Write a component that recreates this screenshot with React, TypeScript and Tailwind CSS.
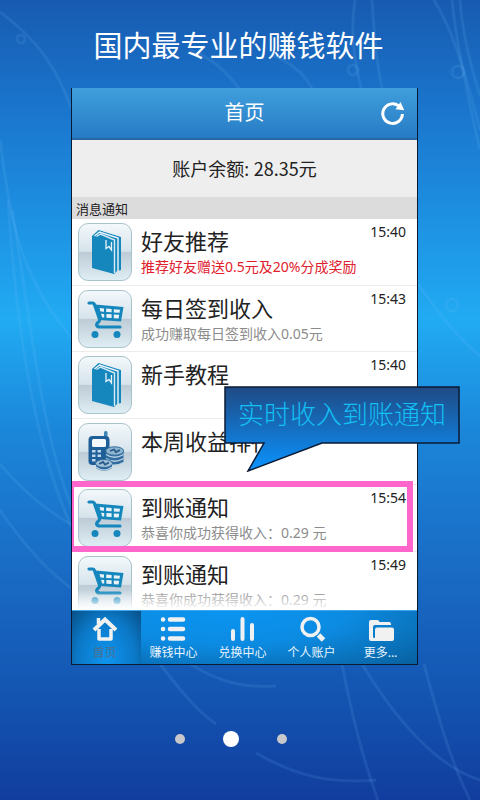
import React from "react";

function Backdrop() {
  return (
    <svg
      className="absolute inset-0 -z-10 h-full w-full"
      viewBox="0 0 480 800"
      preserveAspectRatio="none"
      fill="none"
      aria-hidden="true"
    >
      <g stroke="#7cc4ff" strokeOpacity="0.12" strokeWidth="3">
        <path d="M0 12C38 40 58 70 71 108" />
        <path d="M0 140C8 200 14 240 34 280S60 320 76 345" />
        <path d="M8 200C16 320 32 440 72 528" />
        <path d="M12 210C28 300 40 430 72 508" />
        <path d="M0 464C24 492 48 512 74 526" />
        <path d="M0 510C24 545 48 572 74 590" />
        <path d="M190 50C214 58 230 76 240 90" />
        <path d="M270 55C292 62 304 74 312 88" />
        <path d="M355 0C350 30 354 60 361 88" />
        <path d="M372 0C374 34 376 60 382 88" />
        <path d="M434 0C452 30 462 60 480 130" />
        <path d="M452 0C456 40 466 90 480 150" />
        <path d="M460 0C462 30 472 70 480 96" />
        <path d="M418 284C436 310 460 340 480 356" />
        <path d="M160 664C180 690 196 710 216 724" />
        <path d="M190 664C222 684 248 688 276 686" />
        <path d="M256 753C296 776 330 784 376 780" />
        <path d="M342 664C352 716 362 758 378 800" />
        <path d="M362 664C396 720 436 766 480 780" />
        <path d="M424 664C438 716 450 760 470 800" />
      </g>
      <g stroke="#7cc4ff" strokeOpacity="0.12" strokeWidth="3">
        <circle cx="21" cy="39" r="4" />
        <circle cx="353" cy="70" r="5" />
        <circle cx="458" cy="72" r="6" />
        <circle cx="452" cy="305" r="6" />
      </g>
    </svg>
  );
}

function RefreshIcon() {
  return (
    <svg className="h-6 w-6" viewBox="0 0 24 24" fill="none" aria-hidden="true">
      <path d="M21.400 13A9.800 9.800 0 1 1 17.500 4.800" stroke="#fff" strokeWidth="3" />
      <path d="M19.500 1L23.300 9.300L14.500 8.300Z" fill="#fff" />
    </svg>
  );
}

function BookIcon() {
  return (
    <svg className="h-full w-full" viewBox="1 1 52 56" aria-hidden="true">
      <path d="M14 13L20.500 7L43 14V47L39 48L36 51L14 45Z" fill="#1587bd" />
      <path d="M16.500 13L21.500 9L40 15V48" fill="none" stroke="#eef6fa" strokeWidth="1.400" />
      <path d="M18.500 13.500L22.500 11L36.500 17V50" fill="none" stroke="#d9ebf4" strokeWidth="1.400" />
      <path d="M28 17V25.500L31 23.500L33.500 27V19" fill="none" stroke="#e8f4fa" strokeWidth="1.300" />
    </svg>
  );
}

function CartIcon() {
  return (
    <svg className="h-full w-full" viewBox="1 1 52 56" aria-hidden="true">
      <path d="M17 14.500L45.500 17L43 31.500L22 30Z" fill="#1587bd" />
      <g fill="#e9f2f7">
        <path d="M21.500 18L26 18.400V21.800L22.500 21.500ZM28.200 18.600L33.600 19V22.300L28.200 22ZM35.800 19.200L42 19.700L41.500 22.800L35.800 22.500Z" />
        <path d="M23 23.700L26.200 23.900V27.600L24.200 27.500ZM28.400 24L33.600 24.300V28L28.400 27.700ZM35.800 24.500L41.200 24.800L40.600 28.500L35.800 28.200Z" />
      </g>
      <path
        d="M11 13H14.500Q16 13 16.600 15L21.500 29Q22 31 20 32.500Q17.500 35 19.500 36.500Q20.500 37 22.500 37H42"
        fill="none"
        stroke="#1587bd"
        strokeWidth="3.200"
        strokeLinecap="round"
        strokeLinejoin="round"
      />
      <circle cx="17" cy="44.500" r="3.500" fill="#1587bd" />
      <circle cx="39" cy="44.500" r="3.500" fill="#1587bd" />
    </svg>
  );
}

function PhoneCoinsIcon() {
  return (
    <svg className="h-full w-full" viewBox="1 1 52 56" aria-hidden="true">
      <rect x="26" y="8" width="3.500" height="11" rx="1.500" fill="#3c84b5" />
      <rect x="10.500" y="13" width="21" height="29" rx="4" fill="#1f5f98" />
      <rect x="14" y="16" width="14" height="8" rx="1.500" fill="#f2f8fb" />
      <g fill="#bcd8ea">
        <rect x="14" y="27" width="3.500" height="2.500" />
        <rect x="19.500" y="27" width="3.500" height="2.500" />
        <rect x="14" y="31.500" width="3.500" height="2.500" />
        <rect x="19.500" y="31.500" width="3.500" height="2.500" />
        <rect x="14" y="36" width="3.500" height="2.500" />
      </g>
      <path d="M28 28V39Q36 45 45.500 39V28Z" fill="#316e9f" />
      <g fill="none" stroke="#b9d3e4" strokeWidth="1.300">
        <path d="M28 31.500Q36.500 37 45.500 31.500M28 35.500Q36.500 41 45.500 35.500M28 39.500Q36.500 45 45.500 39.500" />
      </g>
      <ellipse cx="36.700" cy="28" rx="9" ry="4.200" fill="#8fb4ce" stroke="#316e9f" />
      <path d="M32 28L36 26.500L38 29L42 27" stroke="#24598a" strokeWidth="1.800" fill="none" />
      <path d="M18 41V45Q26 51 34 45V41Z" fill="#28629a" />
      <path d="M18 44Q26 50 34 44" fill="none" stroke="#b9d3e4" strokeWidth="1.300" />
      <ellipse cx="26" cy="40.500" rx="8.500" ry="4" fill="#a3c1d6" stroke="#316e9f" />
      <path d="M21 41L25 39L27 41.500L31 39.500" stroke="#24598a" strokeWidth="1.800" fill="none" />
    </svg>
  );
}

type Notice = {
  icon: () => React.ReactElement;
  title: string;
  detail?: string;
  time?: string;
  alert?: boolean;
  framed?: boolean;
};

const notices: Notice[] = [
  { icon: BookIcon, title: "好友推荐", detail: "推荐好友赠送0.5元及20%分成奖励", time: "15:40", alert: true },
  { icon: CartIcon, title: "每日签到收入", detail: "成功赚取每日签到收入0.05元", time: "15:43" },
  { icon: BookIcon, title: "新手教程", time: "15:40" },
  { icon: PhoneCoinsIcon, title: "本周收益排行" },
  { icon: CartIcon, title: "到账通知", detail: "恭喜你成功获得收入：0.29 元", time: "15:54", framed: true },
  { icon: CartIcon, title: "到账通知", detail: "恭喜你成功获得收入：0.29 元", time: "15:49" },
];

function NoticeRow({ notice }: { notice: Notice }) {
  const Icon = notice.icon;
  return (
    <li className="relative flex items-start border-b border-[#ececec] pr-[11px] pl-[6px]">
      <span className="mt-1 h-[58px] w-[54px] shrink-0 rounded-[10px] border border-[#a9c3cc] bg-[linear-gradient(180deg,#f3f8fb_0%,#d6e3eb_49%,#bccbd5_50%,#dfedf4_100%)]">
        <Icon />
      </span>
      <div className="min-w-0 flex-1 pt-2 pl-[9px] whitespace-nowrap">
        <h2 className="text-[22px] leading-7 text-[#222222]">{notice.title}</h2>
        {notice.detail && (
          <p className={notice.alert ? "text-sm leading-6 text-[#e0202c]" : "text-sm leading-6 text-[#8c8c8c]"}>
            {notice.detail}
          </p>
        )}
      </div>
      {notice.time && <time className="absolute top-[3px] right-[11px] text-sm leading-5 text-[#222222]">{notice.time}</time>}
      {notice.framed && (
        <span className="pointer-events-none absolute -top-1 right-1 -bottom-px -left-px border-6 border-l-3 border-[#ff66cc]" />
      )}
    </li>
  );
}

function Callout() {
  return (
    <div className="absolute top-[298px] left-[152px] h-[86px] w-[236px]">
      <svg className="absolute inset-0 h-full w-full" viewBox="0 0 236 86" aria-hidden="true">
        <defs>
          <linearGradient id="callout" x1="0" y1="0" x2="0" y2="1">
            <stop offset="0" stopColor="#1f4a84" />
            <stop offset="1" stopColor="#0a94ff" />
          </linearGradient>
        </defs>
        <path d="M1 1H235V57H98L24 85L40 57H1Z" fill="url(#callout)" stroke="#0b1a33" strokeWidth="1.500" />
      </svg>
      <p className="relative pt-[10px] text-center text-[26px] leading-9 font-light whitespace-nowrap text-[#12c0f4]">
        实时收入到账通知
      </p>
    </div>
  );
}

function HomeIcon() {
  return (
    <svg className="h-7 w-7" viewBox="0 0 28 28" fill="none" stroke="#f1f1f1" aria-hidden="true">
      <path d="M3 15L14 4.500L25 15" strokeWidth="4" />
      <path d="M8 14V24H20V14" strokeWidth="3.500" strokeLinejoin="round" />
      <path d="M7.500 3V9" strokeWidth="3.500" />
    </svg>
  );
}

function ListIcon() {
  return (
    <svg className="h-7 w-7" viewBox="0 0 28 28" stroke="#f1f1f1" strokeWidth="4.500" strokeLinecap="round" aria-hidden="true">
      <path d="M3 4.500H3.100M10 4.500H23M3 14H3.100M10 14H23M3 23.500H3.100M10 23.500H23" />
    </svg>
  );
}

function BarsIcon() {
  return (
    <svg className="h-7 w-7" viewBox="0 0 28 28" stroke="#f1f1f1" strokeWidth="4" strokeLinecap="round" aria-hidden="true">
      <path d="M4 16V24M13.500 4V24M23 10V24" />
    </svg>
  );
}

function SearchIcon() {
  return (
    <svg className="h-7 w-7" viewBox="0 0 28 28" fill="none" stroke="#f1f1f1" aria-hidden="true">
      <circle cx="12.500" cy="12" r="8.500" strokeWidth="3.500" />
      <path d="M20.500 20L25.500 25" strokeWidth="5" />
    </svg>
  );
}

function FolderIcon() {
  return (
    <svg className="h-7 w-7" viewBox="0 0 28 28" fill="#f1f1f1" aria-hidden="true">
      <path d="M2 7Q2 5 4 5H10Q12 5 12.500 7H22Q24 7 24 9V10H8Q6 10 6 12V22Q6 23 8 23H26V24Q26 26 24 26H4Q2 26 2 24Z" />
      <path d="M8 14.500Q8 12.500 10 12.500H25Q27 12.500 27 14.500V24Q27 26 25 26H8Z" />
    </svg>
  );
}

const tabs = [
  { label: "首页", icon: HomeIcon, active: true },
  { label: "赚钱中心", icon: ListIcon, active: false },
  { label: "兑换中心", icon: BarsIcon, active: false },
  { label: "个人账户", icon: SearchIcon, active: false },
  { label: "更多...", icon: FolderIcon, active: false },
];

export default function App() {
  return (
    <main className="relative isolate flex min-h-screen flex-col overflow-hidden bg-[linear-gradient(180deg,#175bb1_0%,#1a72c9_12%,#1d8ee0_26%,#21abf3_40%,#1b86d9_54%,#1a6dc5_70%,#1458b4_85%,#113d9e_100%)] pr-[62px] pl-[71px] font-['Noto_Sans','Noto_Sans_CJK_SC',sans-serif]">
      <Backdrop />
      <h1 className="pt-6 pr-3 text-center text-[29px] leading-[44px] whitespace-nowrap text-white">国内最专业的赚钱软件</h1>

      <section className="relative mt-5 border-x border-b border-[#0b1a33] bg-white">
        <header className="relative flex h-[52px] items-center justify-center border-b-2 border-[#2867a0] bg-[linear-gradient(180deg,#409fdc,#277bc5)]">
          <h2 className="text-xl text-white">首页</h2>
          <button type="button" aria-label="刷新" className="absolute right-3">
            <RefreshIcon />
          </button>
        </header>
        <p className="bg-[#eeeeee] py-4 text-center text-lg leading-6 text-[#222222]">
          账户余额: <span className="font-['Noto_Sans_CJK_SC',sans-serif]">28.35</span>元
        </p>
        <h3 className="h-[22px] bg-[#dcdcdc] px-1 text-[13px] leading-6 text-[#222222]">消息通知</h3>

        <div className="relative h-[391px] overflow-hidden">
          <ul className="grid h-[399px] grid-rows-6">
            {notices.map((notice, i) => (
              <NoticeRow key={i} notice={notice} />
            ))}
          </ul>
          <div className="absolute inset-x-0 bottom-0 h-5 bg-linear-to-b from-transparent to-white" />
        </div>

        <nav className="grid h-[54px] grid-cols-5 border-t border-[#3da5e8] bg-[radial-gradient(ellipse_at_45%_0%,#0a95f2_0%,#0c8be2_45%,#08609f_100%)]">
          {tabs.map(({ label, icon: Icon, active }) => (
            <button
              key={label}
              type="button"
              className={
                active
                  ? "flex flex-col items-center bg-[radial-gradient(ellipse_at_50%_90%,#0e95f0_0%,#0b78c6_60%,#084f86_100%)] pt-1 pr-1 text-[#4a6f8f]"
                  : "flex flex-col items-center pt-1 pr-1 text-[#eaf5fd]"
              }
            >
              <Icon />
              <span className="text-xs leading-5 whitespace-nowrap">{label}</span>
            </button>
          ))}
        </nav>

        <Callout />
      </section>

      <div className="mt-[66px] flex items-center justify-center gap-[38px] pr-7">
        <button type="button" aria-label="第1页" className="h-[10px] w-[10px] rounded-full bg-[#c8c8cc]" />
        <button type="button" aria-label="第2页" className="h-4 w-4 rounded-full bg-white" />
        <button type="button" aria-label="第3页" className="h-[10px] w-[10px] rounded-full bg-[#c8c8cc]" />
      </div>
    </main>
  );
}
